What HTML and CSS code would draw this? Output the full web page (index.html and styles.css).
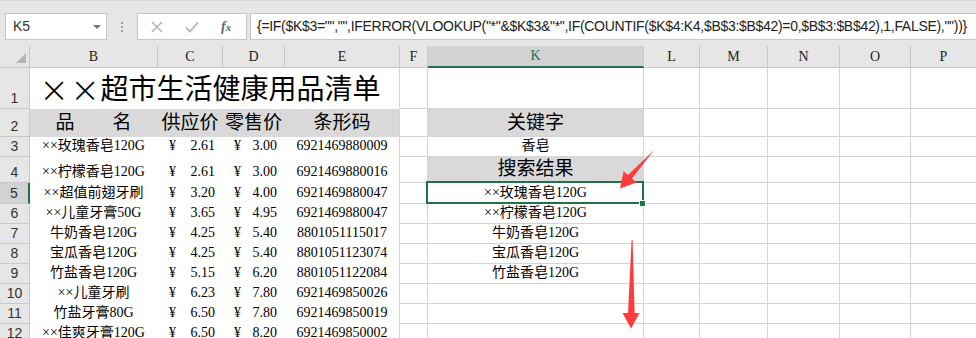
FILE: index.html
```html
<!DOCTYPE html>
<html lang="zh-CN">
<head>
  <meta charset="UTF-8">
  <title>超市生活健康用品清单</title>
  <link rel="stylesheet" href="styles.css">
</head>
<body>
  <div class="topbar">
    <div class="namebox">K5<span class="drop"></span></div>
    <div class="grip"><i></i><i></i><i></i></div>
    <div class="funcs">
      <svg class="ico x" width="12" height="12" viewBox="0 0 12 12"><path d="M1 1L11 11M11 1L1 11" stroke="#b4b4b4" stroke-width="1.6"/></svg>
      <svg class="ico ok" width="14" height="12" viewBox="0 0 14 12"><path d="M1 6.5L5 10.5L13 1.5" fill="none" stroke="#b4b4b4" stroke-width="1.8"/></svg>
      <span class="fx">f<small>x</small></span>
    </div>
    <div class="formula">{=IF($K$3="","",IFERROR(VLOOKUP("*"&amp;$K$3&amp;"*",IF(COUNTIF($K$4:K4,$B$3:$B$42)=0,$B$3:$B$42),1,FALSE),""))}</div>
  </div>

  <div class="sheet">
    <div class="ch corner"><span class="tri"></span></div>
    <div class="ch">B</div><div class="ch">C</div><div class="ch">D</div><div class="ch">E</div><div class="ch">F</div>
    <div class="ch active">K</div><div class="ch">L</div><div class="ch">M</div><div class="ch">N</div><div class="ch">O</div><div class="ch">P</div>

    <div class="rh">1</div>
    <div class="d e title"><span class="xx">×</span><span class="xx">×</span>超市生活健康用品清单</div>
    <div></div><div></div><div></div><div></div><div></div><div></div><div></div>

    <div class="rh">2</div>
    <div class="d fill big">品　　名</div><div class="d fill big">供应价</div><div class="d fill big">零售价</div><div class="d e fill big">条形码</div>
    <div></div><div class="fill big">关键字</div><div></div><div></div><div></div><div></div><div></div>

    <div class="rh">3</div>
    <div class="d">××玫瑰香皂120G</div><div class="d m"><span>¥</span><span>2.61</span></div><div class="d m"><span>¥</span><span>3.00</span></div><div class="d e">6921469880009</div>
    <div></div><div>香皂</div><div></div><div></div><div></div><div></div><div></div>

    <div class="rh">4</div>
    <div class="d">××柠檬香皂120G</div><div class="d m"><span>¥</span><span>2.61</span></div><div class="d m"><span>¥</span><span>3.00</span></div><div class="d e">6921469880016</div>
    <div></div><div class="fill big">搜索结果</div><div></div><div></div><div></div><div></div><div></div>

    <div class="rh active">5</div>
    <div class="d">××超值前翅牙刷</div><div class="d m"><span>¥</span><span>3.20</span></div><div class="d m"><span>¥</span><span>4.00</span></div><div class="d e">6921469880047</div>
    <div></div><div class="sel">××玫瑰香皂120G<span class="handle"></span></div><div></div><div></div><div></div><div></div><div></div>

    <div class="rh">6</div>
    <div class="d">××儿童牙膏50G</div><div class="d m"><span>¥</span><span>3.65</span></div><div class="d m"><span>¥</span><span>4.95</span></div><div class="d e">6921469880047</div>
    <div></div><div>××柠檬香皂120G</div><div></div><div></div><div></div><div></div><div></div>

    <div class="rh">7</div>
    <div class="d">牛奶香皂120G</div><div class="d m"><span>¥</span><span>4.25</span></div><div class="d m"><span>¥</span><span>5.40</span></div><div class="d e">8801051115017</div>
    <div></div><div>牛奶香皂120G</div><div></div><div></div><div></div><div></div><div></div>

    <div class="rh">8</div>
    <div class="d">宝瓜香皂120G</div><div class="d m"><span>¥</span><span>4.25</span></div><div class="d m"><span>¥</span><span>5.40</span></div><div class="d e">8801051123074</div>
    <div></div><div>宝瓜香皂120G</div><div></div><div></div><div></div><div></div><div></div>

    <div class="rh">9</div>
    <div class="d">竹盐香皂120G</div><div class="d m"><span>¥</span><span>5.15</span></div><div class="d m"><span>¥</span><span>6.20</span></div><div class="d e">8801051122084</div>
    <div></div><div>竹盐香皂120G</div><div></div><div></div><div></div><div></div><div></div>

    <div class="rh">10</div>
    <div class="d">××儿童牙刷</div><div class="d m"><span>¥</span><span>6.23</span></div><div class="d m"><span>¥</span><span>7.80</span></div><div class="d e">6921469850026</div>
    <div></div><div></div><div></div><div></div><div></div><div></div><div></div>

    <div class="rh">11</div>
    <div class="d">竹盐牙膏80G</div><div class="d m"><span>¥</span><span>6.50</span></div><div class="d m"><span>¥</span><span>7.80</span></div><div class="d e">6921469850019</div>
    <div></div><div></div><div></div><div></div><div></div><div></div><div></div>

    <div class="rh">12</div>
    <div class="d">××佳爽牙膏120G</div><div class="d m"><span>¥</span><span>6.50</span></div><div class="d m"><span>¥</span><span>8.20</span></div><div class="d e">6921469850002</div>
    <div></div><div></div><div></div><div></div><div></div><div></div><div></div>
  </div>

  <svg class="arrows" width="976" height="338" viewBox="0 0 976 338">
    <polygon points="654.5,149.6 632,178.6 636.5,182.5 620,188.5 623.6,171.3 628,175 653.6,150.4" fill="#ff3b3b"/>
    <polygon points="632.6,240 634.6,313 639.5,313 631,328.5 622.5,313 628,313 631.6,240" fill="#ff3b3b"/>
  </svg>
</body>
</html>
```

FILE: styles.css
```css
body { margin: 0; background: #fff; font-family: "Liberation Serif", "Noto Sans CJK SC", serif; overflow: hidden; position: relative; }

/* formula bar */
.topbar { height: 46px; background: #e6e6e6; display: flex; align-items: flex-start; padding-top: 12px; box-sizing: border-box; border-top: 1px solid #d8d8d8; }
.namebox { margin-left: 5px; width: 102px; height: 27px; box-sizing: border-box; background: #fff; border: 1px solid #c6c6c6; font: 14px/25px "Liberation Sans", sans-serif; color: #333; padding-left: 7px; position: relative; }
.drop { position: absolute; right: 5px; top: 11px; border-left: 4px solid transparent; border-right: 4px solid transparent; border-top: 4px solid #777; }
.grip { width: 30px; height: 27px; display: flex; flex-direction: column; align-items: center; justify-content: center; gap: 2px; }
.grip i { width: 2px; height: 2px; background: #a0a0a0; }
.funcs { width: 110px; height: 27px; box-sizing: border-box; background: #fff; border: 1px solid #c6c6c6; display: flex; align-items: center; }
.funcs .x { margin-left: 13px; }
.funcs .ok { margin-left: 22px; }
.fx { margin-left: 22px; font: italic bold 14px "Liberation Serif", serif; color: #666; }
.fx small { font-size: 11px; }
.formula { flex: 1; margin-left: 3px; margin-right: -10px; height: 27px; box-sizing: border-box; background: #fff; border: 1px solid #c6c6c6; font: 14px/25px "Liberation Sans", sans-serif; letter-spacing: -0.3px; color: #222; padding-left: 6px; white-space: nowrap; overflow: hidden; }

/* worksheet */
.sheet { display: grid; grid-template-columns: 30px 128px 65px 62px 115px 28px 216px 56px 68px 72px 71px 66px; grid-template-rows: 22px 41px 28px 20px 26px 21px repeat(7, 20px); }
.sheet > div { box-sizing: border-box; border-right: 1px solid #d4d4d4; border-bottom: 1px solid #d4d4d4; display: flex; align-items: flex-end; justify-content: center; font-size: 14px; line-height: 18px; padding-bottom: 1px; white-space: nowrap; color: #000; }

.sheet > .ch { background: #e6e6e6; border-color: #c8c8c8; align-items: center; padding: 0; font-size: 14px; color: #222; }
.sheet > .ch.active { background: #d2d2d2; color: #217346; border-bottom: 2px solid #217346; }
.corner { position: relative; }
.tri { position: absolute; right: 3px; bottom: 4px; border-left: 10px solid transparent; border-bottom: 10px solid #b4b4b4; }

.sheet > .rh { background: #e6e6e6; border-color: #c8c8c8; font-family: "Liberation Sans", sans-serif; font-size: 14px; color: #333; padding-bottom: 1px; }
.sheet > .rh.active { background: #d2d2d2; border-right: 2px solid #217346; }

.sheet > .d { border-color: transparent; }
.sheet > .e { border-right-color: #d4d4d4; }
.sheet > .title { grid-column: span 4; font-size: 28px; line-height: 34px; padding-right: 10px; }
.title .xx { display: inline-block; width: 31px; text-align: center; font: 300 36px/34px "DejaVu Sans", sans-serif; }
.sheet > .fill { background: #d9d9d9; }
.sheet > .big { font-size: 19px; line-height: 24px; }
.sheet > .m { justify-content: space-between; padding-left: 11px; padding-right: 7px; }

.sheet > .sel { position: relative; }
.sel::after { content: ""; position: absolute; left: -2px; top: -2px; right: -1px; bottom: -1px; border: 2px solid #217346; }
.handle { position: absolute; right: -3px; bottom: -4px; width: 5px; height: 5px; background: #217346; border: 1px solid #fff; z-index: 1; }

.arrows { position: absolute; left: 0; top: 0; pointer-events: none; }
```
